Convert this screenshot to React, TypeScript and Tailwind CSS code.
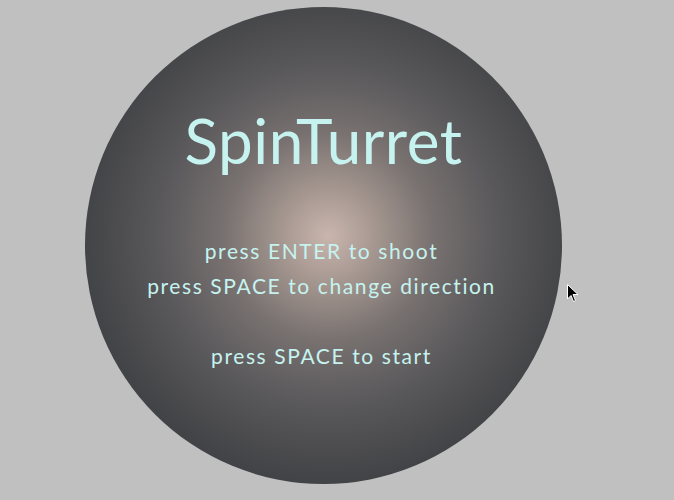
export default function App() {
  return (
    <div className="relative w-[674px] h-[500px] bg-[#c0c0c0] overflow-hidden">
      <div className="pt-[7px] pl-[85px]">
        <div
          className="w-[477px] h-[477px] rounded-full flex flex-col items-center text-[#c6f3ef] bg-[radial-gradient(circle_at_51%_48%,#c9b5ae_0%,#a4968f_14%,#787170_30%,#58575a_50%,#434447_70%,#35383c_88%,#2e3135_100%)]"
          style={{ fontFamily: '"Lato", "DejaVu Sans", sans-serif' }}
        >
          <h1 className="mt-[95px] text-[62px] leading-[76px] font-normal tracking-[0.5px]">SpinTurret</h1>
          <div className="mt-[55px] -ml-[4px] flex flex-col items-center text-[21px] leading-[35px] tracking-[1.6px] font-normal">
            <span>press ENTER to shoot</span>
            <span>press SPACE to change direction</span>
            <span className="mt-[35px]">press SPACE to start</span>
          </div>
        </div>
      </div>
      <svg className="absolute left-[567px] top-[284px]" width="12" height="19" viewBox="0 0 12 19">
        <path d="M0.5 0.5 L0.5 15 L4 11.5 L6.5 17.5 L8.5 16.5 L6 10.5 L11 10.5 Z" fill="#000" stroke="#fff" strokeWidth="1" />
      </svg>
    </div>
  );
}
